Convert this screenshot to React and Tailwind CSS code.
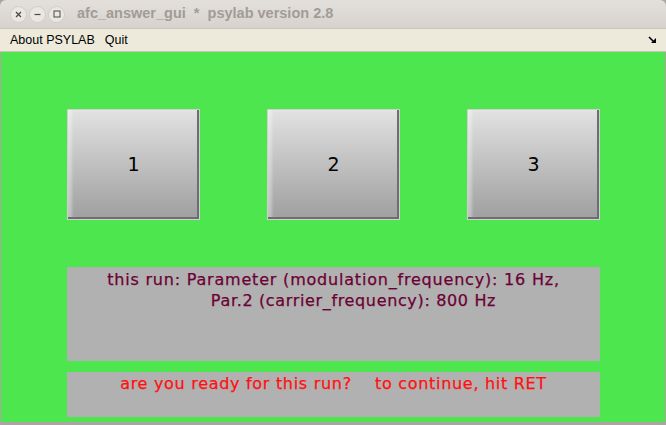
import React from "react";

const BTNS = ["1", "2", "3"];

function TitleButton({ children }) {
  return (
    <div className="w-[17px] h-[17px] rounded-full bg-[#eae7e3] border border-[#d2cdc7] flex items-center justify-center text-[#4a4a4a]">
      {children}
    </div>
  );
}

function BigButton({ label }) {
  return (
    <button className="w-[133px] h-[111px] border border-[#cfcfcf] bg-gradient-to-b from-[#e2e2e2] to-[#9f9f9f] shadow-[inset_-2px_-2px_0_#6e6e72,inset_4px_0_3px_rgba(255,255,255,0.35)] flex items-center justify-center text-[19px] text-black font-['DejaVu_Sans',sans-serif]">
      {label}
    </button>
  );
}

export default function App() {
  return (
    <div className="w-[666px] h-[425px] flex flex-col bg-[#a9a5a0] font-['DejaVu_Sans',sans-serif] overflow-hidden">
      {/* title bar */}
      <div className="h-[29px] rounded-t-[6px] bg-gradient-to-b from-[#e3e0dc] to-[#d7d2cc] flex items-center pl-[10px] gap-[2px] border-b border-[#cbc5be]">
        <TitleButton>
          <svg width="7" height="7" viewBox="0 0 7 7"><path d="M1 1L6 6M6 1L1 6" stroke="#4a4a4a" strokeWidth="1.3" /></svg>
        </TitleButton>
        <TitleButton>
          <svg width="7" height="7" viewBox="0 0 7 7"><path d="M0.5 3.5H6.5" stroke="#4a4a4a" strokeWidth="1.2" /></svg>
        </TitleButton>
        <TitleButton>
          <svg width="8" height="8" viewBox="0 0 8 8"><rect x="1" y="1" width="6" height="6" fill="none" stroke="#4a4a4a" strokeWidth="1" /></svg>
        </TitleButton>
        <span className="ml-[10px] text-[14.5px] font-bold text-[#a19c96] font-['Liberation_Sans',sans-serif] whitespace-pre">
          {"afc_answer_gui  *  psylab version 2.8"}
        </span>
      </div>

      {/* menu bar */}
      <div className="h-[23px] bg-[#edeadb] flex items-center pl-[10px] pr-[8px] text-[12.5px] text-black font-['Liberation_Sans',sans-serif] border-b border-[#c9c5b8]">
        <span>About PSYLAB</span>
        <span className="ml-[10px]">Quit</span>
        <svg className="ml-auto" width="10" height="9" viewBox="0 0 10 9">
          <path d="M1 1L6 6" stroke="#000" strokeWidth="1.6" />
          <path d="M3 7H8V2Z" fill="#000" />
        </svg>
      </div>

      {/* main green area */}
      <div className="flex-1 ml-[1px] mr-[1px] mb-[3px] bg-[#4de64f] flex flex-col pl-[66px] pr-[65px] pt-[57px]">
        <div className="flex justify-between">
          {BTNS.map((b) => (
            <BigButton key={b} label={b} />
          ))}
        </div>

        <div className="mt-[47px] h-[94px] bg-[#b1b1b1] flex flex-col items-center pt-[2px] text-[16px] leading-[21px] text-[#6c0034] tracking-[0.8px] [-webkit-text-stroke:0.25px_#6c0034]">
          <span>this run: Parameter (modulation_frequency): 16 Hz,</span>
          <span className="pl-[40px] tracking-[0.65px]">Par.2 (carrier_frequency): 800 Hz</span>
        </div>

        <div className="mt-[11px] h-[45px] bg-[#b1b1b1] flex justify-center pt-[1px] text-[16px] leading-[21px] text-[#ff1010] tracking-[0.7px] whitespace-pre [-webkit-text-stroke:0.25px_#ff1010]">
          <span>{"are you ready for this run?    to continue, hit RET"}</span>
        </div>
      </div>
    </div>
  );
}
